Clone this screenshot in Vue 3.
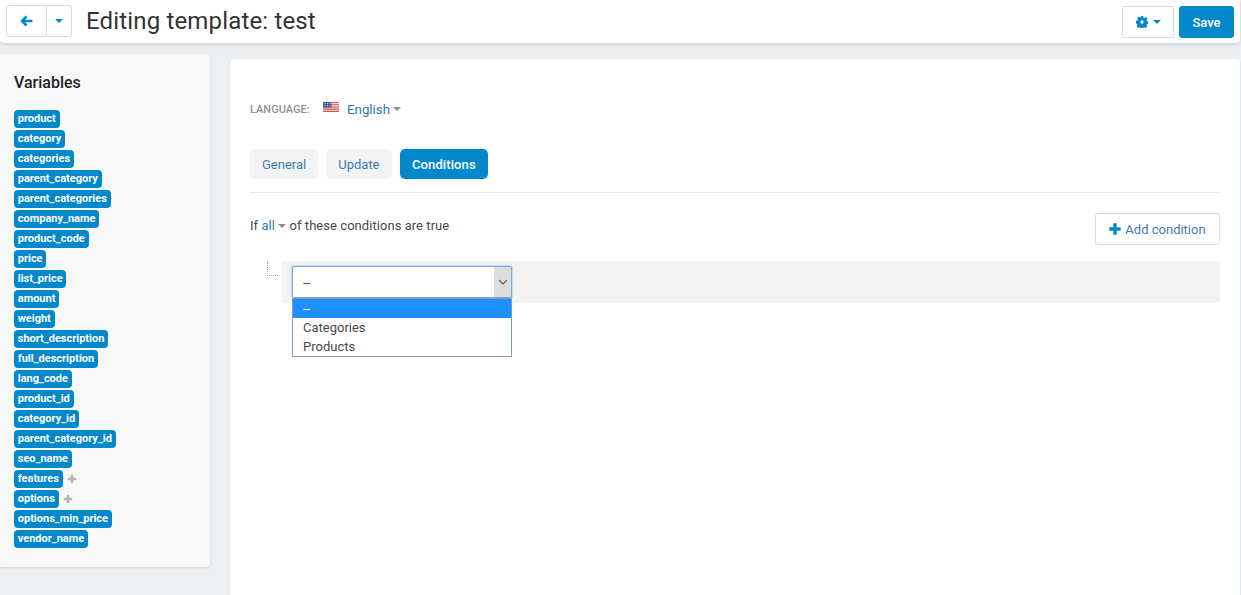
<script setup>
const vars = [
  ['product'], ['category'], ['categories'], ['parent_category'], ['parent_categories'],
  ['company_name'], ['product_code'], ['price'], ['list_price'], ['amount'], ['weight'],
  ['short_description'], ['full_description'], ['lang_code'], ['product_id'], ['category_id'],
  ['parent_category_id'], ['seo_name'], ['features', true], ['options', true],
  ['options_min_price'], ['vendor_name']
]
</script>

<template>
  <div class="page">
    <header class="topbar">
      <div class="btn-group">
        <button class="btn back">
          <svg width="13" height="12" viewBox="0 0 13 12"><path d="M6.6 1.4 L2 6 L6.6 10.6 M2.6 6 H12.4" fill="none" stroke="#0388cc" stroke-width="2.7" stroke-linejoin="round"/></svg>
        </button>
        <button class="btn drop"><span class="caret blue"></span></button>
      </div>
      <h1 class="title">Editing template: test</h1>
      <div class="actions">
        <button class="btn gear">
          <svg width="12" height="12" viewBox="0 0 14 14"><path fill="#0388cc" fill-rule="evenodd" d="M5.6 0h2.8l.3 1.9 1.1.5 1.6-1.1 2 2-1.1 1.6.5 1.1 1.9.3v2.8l-1.9.3-.5 1.1 1.1 1.6-2 2-1.6-1.1-1.1.5-.3 1.9H5.6l-.3-1.9-1.1-.5-1.6 1.1-2-2 1.1-1.6-.5-1.1L0 8.4V5.6l1.9-.3.5-1.1-1.1-1.6 2-2 1.6 1.1 1.1-.5zM7 5a2 2 0 1 0 0 4 2 2 0 0 0 0-4z"/></svg>
          <span class="caret blue"></span>
        </button>
        <button class="btn save">Save</button>
      </div>
    </header>

    <div class="body">
      <aside class="sidebar">
        <h2 class="side-title">Variables</h2>
        <ul class="vars">
          <li v-for="v in vars" :key="v[0]">
            <span class="label">{{ v[0] }}</span>
            <svg v-if="v[1]" class="plus" width="10" height="10" viewBox="0 0 10 10"><path d="M3.7 .8h2.6v2.9h2.9v2.6H6.3v2.9H3.7V6.3H.8V3.7h2.900z" fill="#b3b3b3"/></svg>
          </li>
        </ul>
      </aside>

      <main class="card">
        <div class="lang">
          <span class="lang-label">LANGUAGE:</span>
          <svg class="flag" width="16" height="10" viewBox="0 0 16 10">
            <rect width="16" height="10" fill="#f3e4e2"/>
            <path d="M0 0h16v1.1H0zM0 2.2h16v1.1H0zM0 4.4h16v1.1H0zM0 6.6h16v1.1H0zM0 8.8h16V10H0z" fill="#d8574e"/>
            <rect width="8.5" height="5.5" fill="#47589f"/>
            <path d="M1.5 1.5h1M4 1.500h1M6.5 1.5h1M1.5 3.5h1M4 3.5h1M6.5 3.5h1" stroke="#d5daf0" stroke-width="1"/>
          </svg>
          <a class="lang-link">English</a>
          <span class="caret grey"></span>
        </div>

        <nav class="tabs">
          <a class="tab">General</a>
          <a class="tab">Update</a>
          <a class="tab active">Conditions</a>
        </nav>

        <div class="cond-head">
          <p class="cond-text">If <a class="link">all</a> <span class="caret grey small"></span> of these conditions are true</p>
          <button class="btn add">
            <svg width="12" height="12" viewBox="0 0 12 12"><path d="M4.3 .3h3.4v4h4v3.4h-4v4H4.3v-4h-4V4.300h4z" fill="#0388cc"/></svg>
            Add condition
          </button>
        </div>

        <div class="cond-row">
          <span class="tree"></span>
          <div class="cond-box">
            <div class="select">
              <span class="select-value">--</span>
              <span class="select-arrow">
                <svg width="10" height="6" viewBox="0 0 10 6"><path d="M1 1l4 4 4-4" fill="none" stroke="#666" stroke-width="1.4"/></svg>
              </span>
              <ul class="options">
                <li class="selected">--</li>
                <li>Categories</li>
                <li>Products</li>
              </ul>
            </div>
          </div>
        </div>
      </main>
    </div>
  </div>
</template>

<style>
html, body { margin: 0; height: 100%; overflow: hidden; }
</style>

<style scoped>
* { box-sizing: border-box; }
.page {
  width: 1241px;
  height: 595px;
  overflow: hidden;
  background: #edf0f3;
  font-family: Roboto, "Liberation Sans", sans-serif;
  color: #333;
  font-size: 13px;
  padding-right: 1px;
}
.topbar {
  height: 43px;
  background: #fff;
  display: flex;
  align-items: flex-start;
  padding: 5px 6px 0;
  box-shadow: 0 1px 5px rgba(0, 0, 0, .16);
  border-radius: 0 0 4px 4px;
  position: relative;
}
.btn {
  font-family: inherit;
  background: #fff;
  border: 1px solid #d5dde2;
  border-radius: 3px;
  padding: 0;
  display: inline-flex;
  align-items: center;
  justify-content: center;
}
.btn-group { display: flex; }
.back { width: 41px; height: 32px; border-radius: 3px 0 0 3px; }
.drop { width: 25px; height: 32px; border-left: 0; border-radius: 0 3px 3px 0; }
.title {
  margin: 0 0 0 14px;
  font-size: 24px;
  line-height: 32px;
  font-weight: 400;
  color: #333;
  letter-spacing: .16px;
}
.caret {
  display: inline-block;
  width: 0;
  height: 0;
  border-left: 4px solid transparent;
  border-right: 4px solid transparent;
  border-top: 4px solid #0388cc;
}
.caret.grey { border-top-color: #8b8b8b; }
.actions { margin-left: auto; display: flex; gap: 5px; margin-top: 1px; }
.gear { width: 52px; height: 32px; gap: 5px; }
.save {
  width: 55px;
  height: 32px;
  background: #0388cc;
  border-color: #0388cc;
  color: #fff;
  font-size: 13px;
  font-weight: 500;
}
.body { display: flex; align-items: flex-start; gap: 20px; }
.sidebar {
  width: 210px;
  height: 513px;
  margin-top: 11px;
  background: #f8f8f9;
  border-radius: 0 4px 4px 0;
  box-shadow: 0 1px 3px rgba(0, 0, 0, .14);
  padding: 20px 14px 0;
}
.side-title {
  margin: 0 0 17px;
  font-size: 16px;
  font-weight: 500;
  line-height: 18px;
  color: #222;
}
.vars { list-style: none; margin: 0; padding: 0; }
.vars li { height: 20px; display: flex; align-items: center; }
.label {
  height: 18px;
  line-height: 18px;
  padding: 0 3.75px;
  border-radius: 4px;
  background: #0388cc;
  color: #fff;
  font-size: 11px;
  font-weight: 700;
}
.plus { margin-left: 4.5px; }
.card {
  flex: 1;
  height: 536px;
  margin-top: 16px;
  background: #fff;
  border-radius: 4px 4px 0 0;
  box-shadow: 0 1px 3px rgba(0, 0, 0, .1);
  padding: 42px 20px 0 20px;
}
.lang { display: flex; align-items: center; height: 16px; }
.lang-label { font-size: 11px; font-weight: 500; color: #909090; width: 73px; }
.flag { margin-top: -4px; }
.lang-link { color: #2c79b0; margin-left: 8px; font-size: 13.3px; }
.lang .caret { margin-left: 3px; margin-top: -1px; }
.tabs {
  display: flex;
  gap: 8px;
  margin-top: 32px;
  padding-bottom: 13px;
  border-bottom: 1px solid #e3e8ec;
}
.tab {
  height: 30px;
  line-height: 31px;
  padding: 0 12px;
  border-radius: 5px;
  background: #f2f3f4;
  color: #3f7cad;
  font-size: 13px;
}
.tab.active { background: #0388cc; color: #fff; font-weight: 500; padding: 0 12.5px; letter-spacing: .1px; }
.cond-head {
  display: flex;
  justify-content: space-between;
  align-items: flex-start;
  margin-top: 20px;
}
.cond-text { margin: 5px 0 0; font-size: 13px; line-height: 16px; color: #484848; letter-spacing: .05px; }
.link { color: #2c79b0; }
.cond-text .caret { vertical-align: 2px; }
.add {
  width: 125px;
  height: 32px;
  color: #3f7cad;
  font-size: 13px;
  gap: 4px;
}
.cond-row { display: flex; margin-top: 16px; }
.tree {
  width: 11px;
  height: 15px;
  margin: 0 4px 0 17px;
  border-left: 1px dotted #aaa;
  border-bottom: 1px dotted #aaa;
}
.cond-box {
  flex: 1;
  height: 42px;
  background: #f3f3f3;
  border-radius: 3px;
  padding: 5px 10px;
}
.select {
  position: relative;
  width: 220px;
  height: 32px;
  background: #fff;
  border: 1px solid #7ea4dc;
  box-shadow: 0 0 1px 1px rgba(143, 180, 230, .45);
  border-radius: 2px;
  display: flex;
  align-items: center;
  font-size: 13px;
  color: #4a4a4a;
}
.select-value { padding-left: 10px; flex: 1; }
.select-arrow {
  width: 17px;
  height: 100%;
  background: #ddd;
  display: flex;
  align-items: center;
  justify-content: center;
}
.options {
  position: absolute;
  left: -1px;
  top: 31px;
  width: 220px;
  margin: 0;
  padding: 0;
  list-style: none;
  background: #fff;
  border: 1px solid #7f9db9;
  line-height: 19px;
  color: #4a4a4a;
}
.options li { height: 19px; padding-left: 10px; }
.options .selected { background: #1e90ff; color: #fff; }
</style>
